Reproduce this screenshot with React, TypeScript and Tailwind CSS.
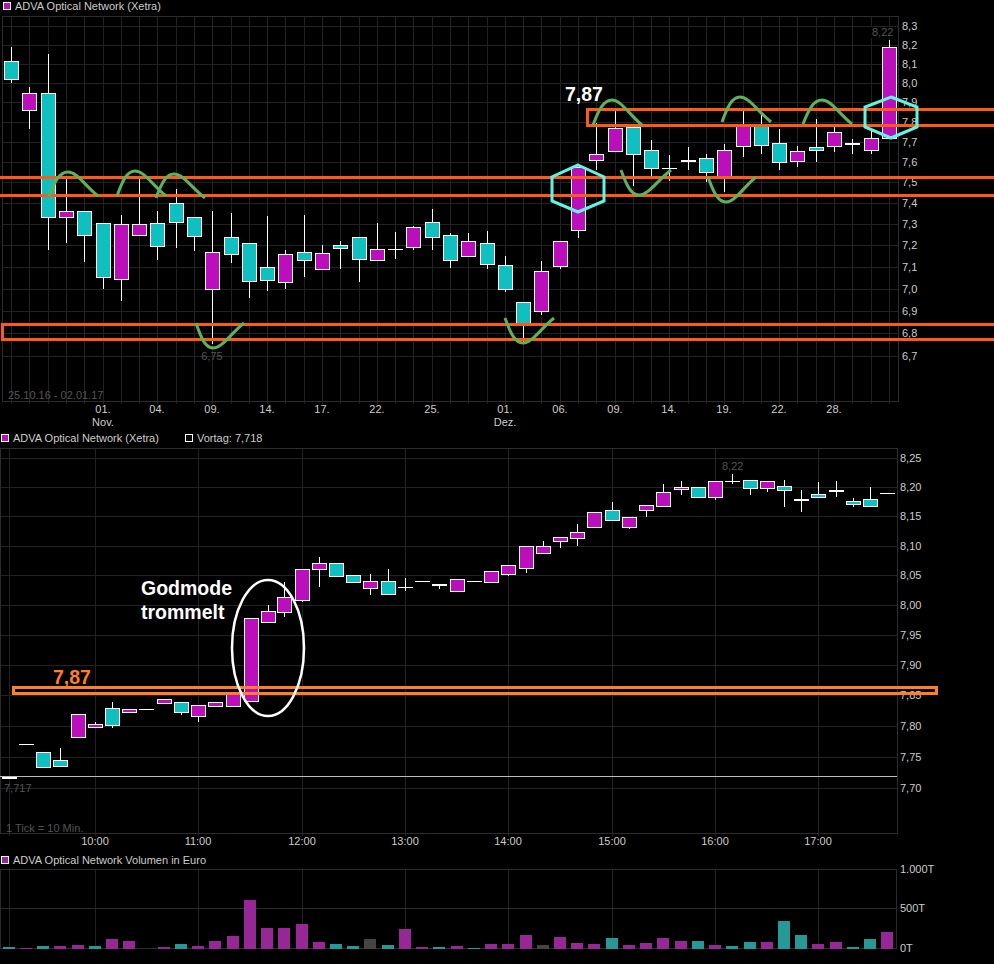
type Kind = "t" | "m" | "d" | "x";
type Candle = [number, number, number, number, number, Kind];

// center x, body top, body bottom, wick top, wick bottom, kind (d = dash, x = thick dash)
const dailyCandles: Candle[] = [
  [11, 61, 79, 47, 82, "t"],
  [29, 93, 110, 87, 128, "m"],
  [48, 93, 217, 54, 249, "t"],
  [66, 211, 217, 179, 242, "m"],
  [84, 211, 235, 211, 261, "t"],
  [103, 223, 277, 223, 288, "t"],
  [121, 224, 279, 215, 300, "m"],
  [139, 224, 235, 176, 235, "m"],
  [157, 223, 246, 211, 259, "t"],
  [176, 203, 222, 189, 247, "t"],
  [194, 217, 236, 217, 250, "t"],
  [212, 252, 289, 211, 343, "m"],
  [231, 237, 254, 213, 262, "t"],
  [249, 243, 281, 243, 297, "t"],
  [267, 267, 280, 216, 290, "t"],
  [285, 254, 282, 250, 288, "m"],
  [304, 252, 260, 215, 276, "t"],
  [322, 253, 269, 245, 269, "m"],
  [340, 245, 248, 241, 268, "t"],
  [359, 237, 259, 237, 281, "t"],
  [377, 249, 260, 223, 260, "m"],
  [395, 249, 249, 232, 258, "d"],
  [413, 227, 247, 226, 249, "m"],
  [432, 222, 237, 209, 249, "t"],
  [450, 235, 260, 233, 267, "t"],
  [468, 241, 256, 233, 256, "m"],
  [487, 243, 264, 231, 268, "t"],
  [505, 265, 289, 256, 291, "t"],
  [523, 302, 325, 302, 342, "t"],
  [541, 271, 311, 261, 314, "m"],
  [560, 241, 266, 241, 268, "m"],
  [578, 167, 230, 167, 237, "m"],
  [596, 154, 160, 123, 169, "m"],
  [615, 128, 151, 110, 151, "m"],
  [633, 127, 154, 125, 185, "t"],
  [651, 150, 168, 140, 177, "t"],
  [669, 168, 168, 155, 180, "d"],
  [688, 161, 161, 147, 169, "x"],
  [706, 158, 172, 154, 181, "t"],
  [724, 150, 178, 144, 191, "m"],
  [743, 125, 146, 111, 156, "m"],
  [761, 124, 145, 115, 153, "t"],
  [779, 143, 162, 129, 169, "t"],
  [797, 151, 161, 146, 166, "m"],
  [816, 147, 150, 119, 161, "t"],
  [834, 132, 146, 127, 151, "m"],
  [852, 144, 144, 139, 153, "x"],
  [871, 138, 150, 131, 153, "m"],
  [889, 47, 138, 40, 138, "m"],
];

const intradayCandles: Candle[] = [
  [9, 778, 778, 778, 778, "x"],
  [26, 744, 744, 744, 744, "d"],
  [43, 752, 767, 752, 767, "t"],
  [60, 760, 766, 748, 766, "t"],
  [78, 714, 737, 714, 737, "m"],
  [95, 724, 727, 722, 727, "m"],
  [112, 708, 725, 702, 727, "t"],
  [129, 709, 712, 709, 712, "m"],
  [146, 709, 709, 709, 709, "d"],
  [164, 699, 703, 699, 703, "m"],
  [181, 702, 712, 702, 714, "t"],
  [198, 705, 716, 705, 721, "m"],
  [215, 702, 706, 702, 706, "m"],
  [233, 694, 706, 694, 706, "m"],
  [251, 618, 701, 618, 701, "m"],
  [268, 611, 622, 605, 622, "m"],
  [284, 597, 612, 582, 616, "m"],
  [302, 569, 600, 569, 601, "m"],
  [319, 563, 569, 557, 586, "m"],
  [336, 563, 576, 563, 576, "t"],
  [353, 575, 582, 575, 582, "t"],
  [370, 581, 588, 574, 594, "m"],
  [388, 581, 594, 569, 594, "t"],
  [405, 587, 587, 578, 590, "d"],
  [422, 581, 581, 581, 581, "d"],
  [439, 585, 585, 585, 588, "x"],
  [457, 579, 591, 579, 591, "m"],
  [474, 581, 581, 581, 581, "d"],
  [491, 571, 582, 571, 582, "m"],
  [508, 565, 574, 565, 575, "m"],
  [526, 546, 568, 546, 572, "m"],
  [543, 546, 553, 541, 553, "m"],
  [560, 537, 541, 537, 547, "m"],
  [577, 532, 538, 524, 545, "m"],
  [594, 512, 527, 512, 527, "m"],
  [612, 510, 520, 502, 520, "t"],
  [629, 517, 527, 517, 528, "m"],
  [646, 505, 510, 505, 516, "m"],
  [663, 492, 506, 484, 506, "m"],
  [681, 487, 489, 481, 494, "m"],
  [698, 487, 497, 487, 497, "t"],
  [715, 481, 497, 481, 499, "m"],
  [732, 481, 481, 474, 483, "d"],
  [750, 480, 488, 480, 494, "t"],
  [767, 481, 488, 481, 491, "m"],
  [784, 486, 490, 480, 506, "t"],
  [801, 500, 500, 490, 511, "x"],
  [818, 494, 497, 482, 497, "t"],
  [836, 491, 491, 481, 496, "x"],
  [853, 501, 504, 498, 506, "t"],
  [870, 499, 506, 487, 506, "t"],
  [887, 493, 493, 493, 493, "d"],
];

// left x, top y, kind (p purple, t teal, g gray)
const volumeBars: [number, number, "p" | "t" | "g"][] = [
  [3, 947, "t"], [20, 948, "p"], [37, 946, "t"], [54, 946, "p"], [72, 945, "p"],
  [89, 946, "t"], [106, 939, "p"], [123, 941, "p"], [158, 947, "p"], [175, 944, "t"],
  [192, 946, "p"], [209, 941, "p"], [227, 936, "p"], [244, 900, "p"], [261, 928, "p"],
  [278, 928, "p"], [296, 924, "p"], [313, 942, "p"], [330, 944, "t"], [347, 946, "t"],
  [364, 939, "g"], [382, 945, "t"], [399, 929, "p"], [416, 947, "p"], [433, 947, "t"],
  [451, 946, "p"], [468, 948, "t"], [485, 944, "p"], [502, 944, "p"], [520, 935, "p"],
  [537, 945, "g"], [554, 937, "p"], [571, 943, "p"], [588, 944, "p"], [606, 938, "t"],
  [623, 945, "p"], [640, 943, "p"], [657, 938, "p"], [675, 941, "p"], [692, 941, "t"],
  [709, 945, "p"], [726, 946, "t"], [744, 942, "t"], [761, 942, "p"], [778, 921, "t"],
  [795, 935, "t"], [812, 944, "p"], [830, 942, "p"], [847, 947, "t"], [864, 939, "t"],
  [881, 932, "p"],
];

const dailyRows: [string, number][] = [
  ["8,3", 26], ["8,2", 45], ["8,1", 64], ["8,0", 83], ["7,9", 102], ["7,8", 122],
  ["7,7", 142], ["7,6", 162], ["7,5", 182], ["7,4", 203], ["7,3", 224], ["7,2", 245],
  ["7,1", 267], ["7,0", 289], ["6,9", 311], ["6,8", 333], ["6,7", 356],
];
const dailyCols = dailyCandles.map((c) => c[0]);
const dailyDates: [string, number, string?][] = [
  ["01.", 103, "Nov."], ["04.", 157], ["09.", 212], ["14.", 267], ["17.", 322], ["22.", 377],
  ["25.", 432], ["01.", 505, "Dez."], ["06.", 560], ["09.", 615], ["14.", 669], ["19.", 724],
  ["22.", 779], ["28.", 834],
];

const intradayRows: [string, number][] = [
  ["8,25", 458], ["8,20", 487], ["8,15", 516], ["8,10", 546], ["8,05", 575], ["8,00", 605],
  ["7,95", 635], ["7,90", 665], ["7,85", 695], ["7,80", 726], ["7,75", 757], ["7,70", 788],
];
const hourCols = [9, 95, 198, 302, 405, 508, 612, 715, 818];
const hourLabels = ["", "10:00", "11:00", "12:00", "13:00", "14:00", "15:00", "16:00", "17:00"];

const TEAL = "#10bfc0";
const MAGENTA = "#ba0fba";
const GRID = "#222222";
const ORANGE = "#ff5a14";
const GREEN = "#5fb25a";
const CYAN = "#5ff5e5";

function Candles({ data }: { data: Candle[] }) {
  return (
    <g shapeRendering="crispEdges">
      {data.map(([x, top, bottom, wTop, wBottom, kind], i) => (
        <g key={i}>
          {wTop !== wBottom && <rect x={x} y={wTop} width={1} height={wBottom - wTop + 1} fill="#fff" />}
          {kind === "d" && <rect x={x - 7} y={top} width={15} height={1} fill="#fff" />}
          {kind === "x" && <rect x={x - 7} y={top - 1} width={15} height={2} fill="#fff" />}
          {(kind === "t" || kind === "m") && (
            <rect
              x={x - 6.5}
              y={top + 0.5}
              width={14}
              height={bottom - top}
              fill={kind === "t" ? TEAL : MAGENTA}
              stroke="#fff"
            />
          )}
        </g>
      ))}
    </g>
  );
}

function Arc({ d }: { d: string }) {
  return <path d={d} fill="none" stroke={GREEN} strokeWidth={3} />;
}

// steep rise from (x0,y) to the peak (px,py), then an almost straight fall to (x1,y)
const hump = (x0: number, y: number, px: number, py: number, x1: number) => {
  const a = px - x0;
  const b = x1 - px;
  const h = py - y;
  return `M${x0} ${y} C${x0 + 0.3 * a} ${y + 0.6 * h} ${px - 0.45 * a} ${py} ${px} ${py} C${px + 0.3 * b} ${py} ${x1 - 0.45 * b} ${y + 0.45 * h} ${x1} ${y}`;
};

function Legend({ fill, text, left }: { fill: string; text: string; left: string }) {
  return (
    <div className={`flex items-center gap-[4px] ${left}`}>
      <span className={`w-[8px] h-[8px] border border-white ${fill}`} />
      <span>{text}</span>
    </div>
  );
}

export default function App() {
  return (
    <div className="w-[994px] h-[964px] bg-black overflow-hidden flex flex-col text-[11px] leading-[12px] text-[#cccccc] [font-family:'Liberation_Sans',Arial,sans-serif]">
      {/* Tageschart */}
      <div className="h-[12px] flex items-center">
        <Legend fill="bg-[#ba0fba]" text="ADVA Optical Network (Xetra)" left="pl-[3px]" />
      </div>
      <svg width={994} height={420} viewBox="0 12 994 420" className="block overflow-visible">
        <g shapeRendering="crispEdges" fill={GRID}>
          {dailyRows.map(([, y]) => (
            <rect key={y} x={2} y={y} width={896} height={1} />
          ))}
          {dailyCols.map((x) => (
            <rect key={x} x={x} y={16} width={1} height={388} />
          ))}
          <rect x={2} y={16} width={897} height={1} fill="#2c2c2c" />
          <rect x={2} y={401} width={897} height={1} fill="#2c2c2c" />
          <rect x={2} y={16} width={1} height={386} fill="#2c2c2c" />
          <rect x={898} y={16} width={1} height={386} fill="#2c2c2c" />
        </g>
        <Candles data={dailyCandles} />
        <g fill="#cccccc">
          {dailyRows.map(([label, y]) => (
            <text key={label} x={902} y={y + 4}>{label}</text>
          ))}
          {dailyDates.map(([label, x, month]) => (
            <g key={x} textAnchor="middle">
              <text x={x} y={413}>{label}</text>
              {month && <text x={x} y={426}>{month}</text>}
            </g>
          ))}
        </g>
        <rect x={867} y={27} width={30} height={11} fill="#000" />
        <g fill="#555555">
          <text x={872} y={36}>8,22</text>
          <text x={212} y={360} textAnchor="middle">6,75</text>
          <text x={8} y={399}>25.10.16 - 02.01.17</text>
        </g>

        <g fill="none" stroke={ORANGE} strokeWidth={3} shapeRendering="crispEdges">
          <path d="M0 177.5H994" />
          <path d="M0 195.5H994" />
          <path d="M1000 109.5H587.5V125.5H1000" />
          <path d="M1000 324.5H2.5V339.5H1000" />
        </g>

        <Arc d={hump(49, 196, 68, 172, 98)} />
        <Arc d={hump(117, 196, 135, 171, 166)} />
        <Arc d={hump(156, 198, 174, 174, 205)} />
        <Arc d={hump(593, 125, 612, 100, 642)} />
        <Arc d={hump(722, 122, 740, 97, 771)} />
        <Arc d={hump(803, 124, 822, 100, 852)} />
        <Arc d={hump(196, 323, 213, 348, 244)} />
        <Arc d={hump(505, 318, 523, 343, 554)} />
        <Arc d={hump(621, 170, 639, 195, 671)} />
        <Arc d={hump(708, 177, 726, 202, 756)} />

        <g fill="none" stroke={CYAN} strokeWidth={3}>
          <path d="M578 165L604 177V201L578 212L552 201V177Z" />
          <path d="M891 97L917 107V127L891 138L865 127V107Z" />
        </g>
        <text x={565} y={101} fill="#fff" fontSize={19.5} fontWeight={700}>7,87</text>
      </svg>

      {/* Intraday */}
      <div className="h-[12px] flex items-center">
        <Legend fill="bg-[#ba0fba]" text="ADVA Optical Network (Xetra)" left="pl-[1px] w-[185px]" />
        <Legend fill="bg-black" text="Vortag: 7,718" left="" />
      </div>
      <svg width={994} height={410} viewBox="0 444 994 410" className="block overflow-visible">
        <g shapeRendering="crispEdges" fill={GRID}>
          {intradayRows.map(([, y]) => (
            <rect key={y} x={0} y={y} width={897} height={1} />
          ))}
          {hourCols.map((x) => (
            <rect key={x} x={x} y={448} width={1} height={388} />
          ))}
          <rect x={0} y={448} width={897} height={1} fill="#2c2c2c" />
          <rect x={0} y={833} width={897} height={1} fill="#2c2c2c" />
          <rect x={0} y={448} width={1} height={386} fill="#2c2c2c" />
          <rect x={897} y={448} width={1} height={386} fill="#2c2c2c" />
          <rect x={0} y={776} width={897} height={1} fill="#bbbbbb" />
        </g>
        <Candles data={intradayCandles} />
        <g fill="#cccccc">
          {intradayRows.map(([label, y]) => (
            <text key={label} x={900} y={y + 4}>{label}</text>
          ))}
          {hourLabels.map((label, i) => (
            <text key={i} x={hourCols[i]} y={845} textAnchor="middle">{label}</text>
          ))}
        </g>
        <g fill="#555555">
          <text x={722} y={470}>8,22</text>
          <text x={4} y={792}>7,717</text>
          <text x={6} y={832}>1 Tick = 10 Min.</text>
        </g>
        <rect x={13.5} y={687} width={923} height={6.5} fill="none" stroke="#ff7f27" strokeWidth={3} shapeRendering="crispEdges" />
        <ellipse cx={268} cy={648} rx={36} ry={68} fill="none" stroke="#fff" strokeWidth={2.5} />
        <g fontSize={19.5} fontWeight={700}>
          <text x={53} y={684} fill="#ff7f27">7,87</text>
          <text x={141} y={595} fill="#fff">Godmode</text>
          <text x={141} y={619} fill="#fff">trommelt</text>
        </g>
      </svg>

      {/* Volumen */}
      <div className="h-[12px] flex items-center">
        <Legend fill="bg-[#962896]" text="ADVA Optical Network Volumen in Euro" left="pl-[1px]" />
      </div>
      <svg width={994} height={98} viewBox="0 866 994 98" className="block overflow-visible">
        <g shapeRendering="crispEdges" fill={GRID}>
          {hourCols.map((x) => (
            <rect key={x} x={x} y={869} width={1} height={80} />
          ))}
          <rect x={0} y={869} width={897} height={1} fill="#2c2c2c" />
          <rect x={0} y={908} width={897} height={1} fill="#2c2c2c" />
          <rect x={0} y={948} width={897} height={1} fill="#2c2c2c" />
          <rect x={0} y={869} width={1} height={80} fill="#2c2c2c" />
          <rect x={896} y={869} width={1} height={80} fill="#2c2c2c" />
        </g>
        <g shapeRendering="crispEdges">
          {volumeBars.map(([x, top, kind]) => (
            <rect
              key={x}
              x={x}
              y={top}
              width={12}
              height={949 - top}
              fill={kind === "p" ? "#962896" : kind === "t" ? "#269898" : "#444444"}
            />
          ))}
        </g>
        <g fill="#cccccc">
          <text x={900} y={873}>1.000T</text>
          <text x={900} y={912}>500T</text>
          <text x={900} y={952}>0T</text>
        </g>
      </svg>
    </div>
  );
}
